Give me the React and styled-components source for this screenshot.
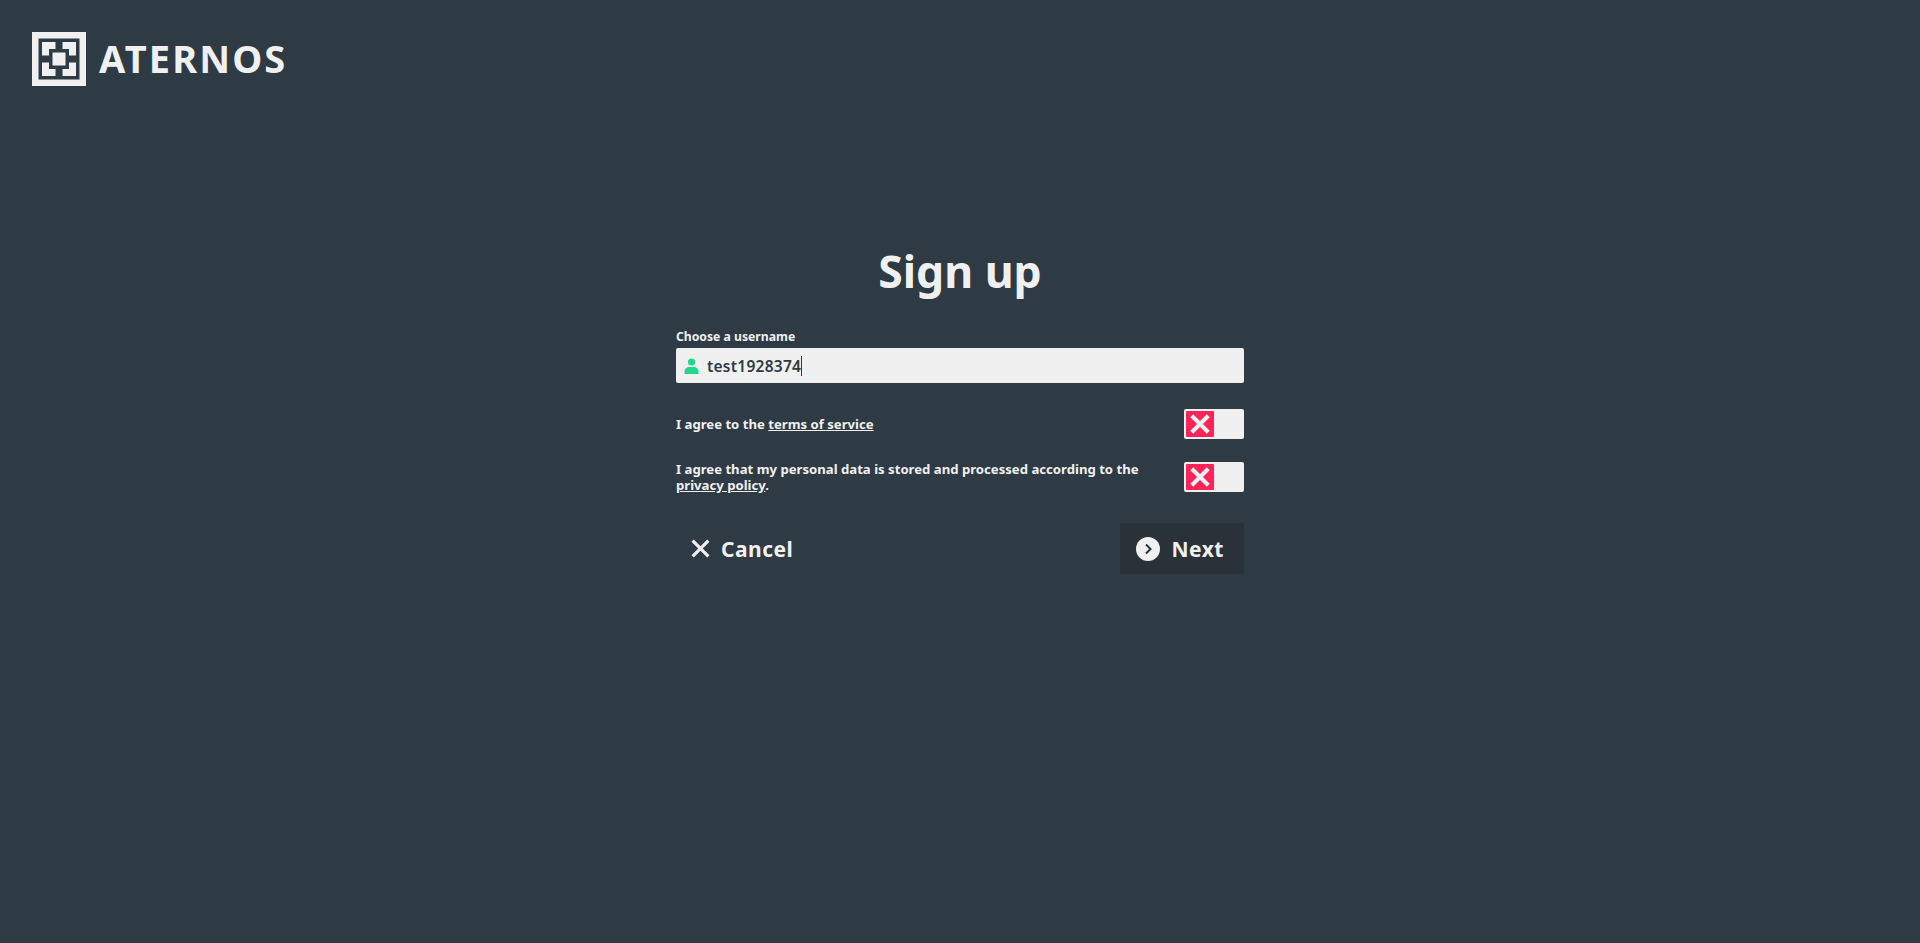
import React from "react";
import styled, { createGlobalStyle } from "styled-components";

const GlobalStyle = createGlobalStyle`
  html, body {
    margin: 0;
    height: 100%;
    background-color: #2e3a44;
  }
  body {
    font-family: "Noto Sans", "Liberation Sans", sans-serif;
    color: #f0f0f0;
  }
`;

const Page = styled.div`
  height: 943px;
  overflow: hidden;
  display: flex;
  flex-direction: column;
  padding: 32px;
  box-sizing: border-box;
`;

const Brand = styled.div`
  display: flex;
  align-items: center;
  gap: 13px;
  height: 54px;
`;

const BrandName = styled.div`
  font-size: 38px;
  font-weight: 700;
  line-height: 50px;
  padding-bottom: 2px;
  letter-spacing: 2.1px;
  color: #f0f0f0;
`;

const Form = styled.div`
  width: 568px;
  margin: 0 auto;
  padding-top: 154px;
  display: flex;
  flex-direction: column;
`;

const Title = styled.h1`
  margin: 0 0 27px;
  font-size: 44.5px;
  line-height: 62px;
  font-weight: 700;
  text-align: center;
  color: #f0f0f0;
`;

const Label = styled.label`
  font-size: 12.2px;
  font-weight: 700;
  line-height: 16px;
  margin-bottom: 3px;
`;

const InputBox = styled.div`
  height: 35px;
  border-radius: 2px;
  background-color: #f0f0f0;
  display: flex;
  align-items: center;
  padding-left: 8px;
  gap: 8px;
  margin-bottom: 26px;
`;

const InputText = styled.span`
  font-size: 15.5px;
  font-weight: 600;
  letter-spacing: 0.25px;
  color: #2e3a44;
  border-right: 1px solid #2e3a44;
  line-height: 20px;
`;

const AgreeRow = styled.div`
  display: flex;
  justify-content: space-between;
  align-items: center;
  min-height: 30px;
  margin-bottom: ${(p) => p.$gap}px;
`;

const AgreeText = styled.p`
  margin: 0;
  width: 480px;
  font-size: 13.15px;
  font-weight: 700;
  line-height: 16px;
  color: #f0f0f0;

  a {
    color: inherit;
    text-decoration: underline;
  }
`;

const Toggle = styled.div`
  width: 60px;
  height: 30px;
  box-sizing: border-box;
  padding: 2px;
  border-radius: 2px;
  background-color: #f0f0f0;
  display: flex;
`;

const ToggleKnob = styled.div`
  width: 28px;
  height: 26px;
  border-radius: 1px;
  background-color: #ff2457;
  display: flex;
  align-items: center;
  justify-content: center;
`;

const Actions = styled.div`
  display: flex;
  justify-content: space-between;
  margin-top: 30px;
`;

const Button = styled.div`
  height: 51px;
  box-sizing: border-box;
  padding: 0 20px 0 ${(p) => (p.$primary ? 16 : 14)}px;
  display: flex;
  align-items: center;
  gap: ${(p) => (p.$primary ? 12 : 10)}px;
  font-size: 21px;
  font-weight: 700;
  letter-spacing: 0.5px;
  border-radius: 2px;
  color: #f0f0f0;
  background-color: ${(p) => (p.$primary ? "#2a3239" : "transparent")};
`;

const Logo = () => (
  <svg width="54" height="54" viewBox="0 0 54 54">
    <rect width="54" height="54" fill="#f0f0f0" />
    <rect x="6.5" y="6.5" width="41" height="41" fill="#2e3a44" />
    <path d="M10 10h13.500v7H17v6.500h-7z" fill="#f0f0f0" />
    <path d="M44 10H30.500v7H37v6.500h7z" fill="#f0f0f0" />
    <path d="M10 44H23.500v-7H17v-6.500h-7z" fill="#f0f0f0" />
    <path d="M44 44H30.500v-7H37v-6.500h7z" fill="#f0f0f0" />
    <rect x="20.500" y="20.500" width="13" height="13" fill="#f0f0f0" />
  </svg>
);

const UserIcon = () => (
  <svg width="15" height="16" viewBox="0 0 15 16">
    <circle cx="7.5" cy="4" r="3.6" fill="#1fd78d" />
    <path d="M0.5 16v-2.5C0.5 10.5 3 9 5 9h5c2 0 4.500 1.500 4.500 4.500V16z" fill="#1fd78d" />
  </svg>
);

const CrossIcon = ({ size, width, color }) => (
  <svg width={size} height={size} viewBox="0 0 16 16">
    <path d="M2 2l12 12M14 2L2 14" stroke={color} strokeWidth={width} fill="none" />
  </svg>
);

const NextIcon = () => (
  <svg width="24" height="24" viewBox="0 0 24 24">
    <circle cx="12" cy="12" r="12" fill="#f0f0f0" />
    <path d="M10 7.500l4.500 4.500L10 16.500" stroke="#2a3239" strokeWidth="2" fill="none" />
  </svg>
);

const App = () => {
  return (
    <Page>
      <GlobalStyle />
      <Brand>
        <Logo />
        <BrandName>ATERNOS</BrandName>
      </Brand>
      <Form>
        <Title>Sign up</Title>
        <Label>Choose a username</Label>
        <InputBox>
          <UserIcon />
          <InputText>test1928374</InputText>
        </InputBox>
        <AgreeRow $gap={22}>
          <AgreeText>
            I agree to the <a href="#terms">terms of service</a>
          </AgreeText>
          <Toggle>
            <ToggleKnob>
              <CrossIcon size={22} width={3} color="#f0f0f0" />
            </ToggleKnob>
          </Toggle>
        </AgreeRow>
        <AgreeRow $gap={0}>
          <AgreeText>
            I agree that my personal data is stored and processed according to the{" "}
            <a href="#privacy">privacy policy</a>.
          </AgreeText>
          <Toggle>
            <ToggleKnob>
              <CrossIcon size={22} width={3} color="#f0f0f0" />
            </ToggleKnob>
          </Toggle>
        </AgreeRow>
        <Actions>
          <Button>
            <CrossIcon size={21} width={2.5} color="#f0f0f0" />
            Cancel
          </Button>
          <Button $primary>
            <NextIcon />
            Next
          </Button>
        </Actions>
      </Form>
    </Page>
  );
};

export default App;
